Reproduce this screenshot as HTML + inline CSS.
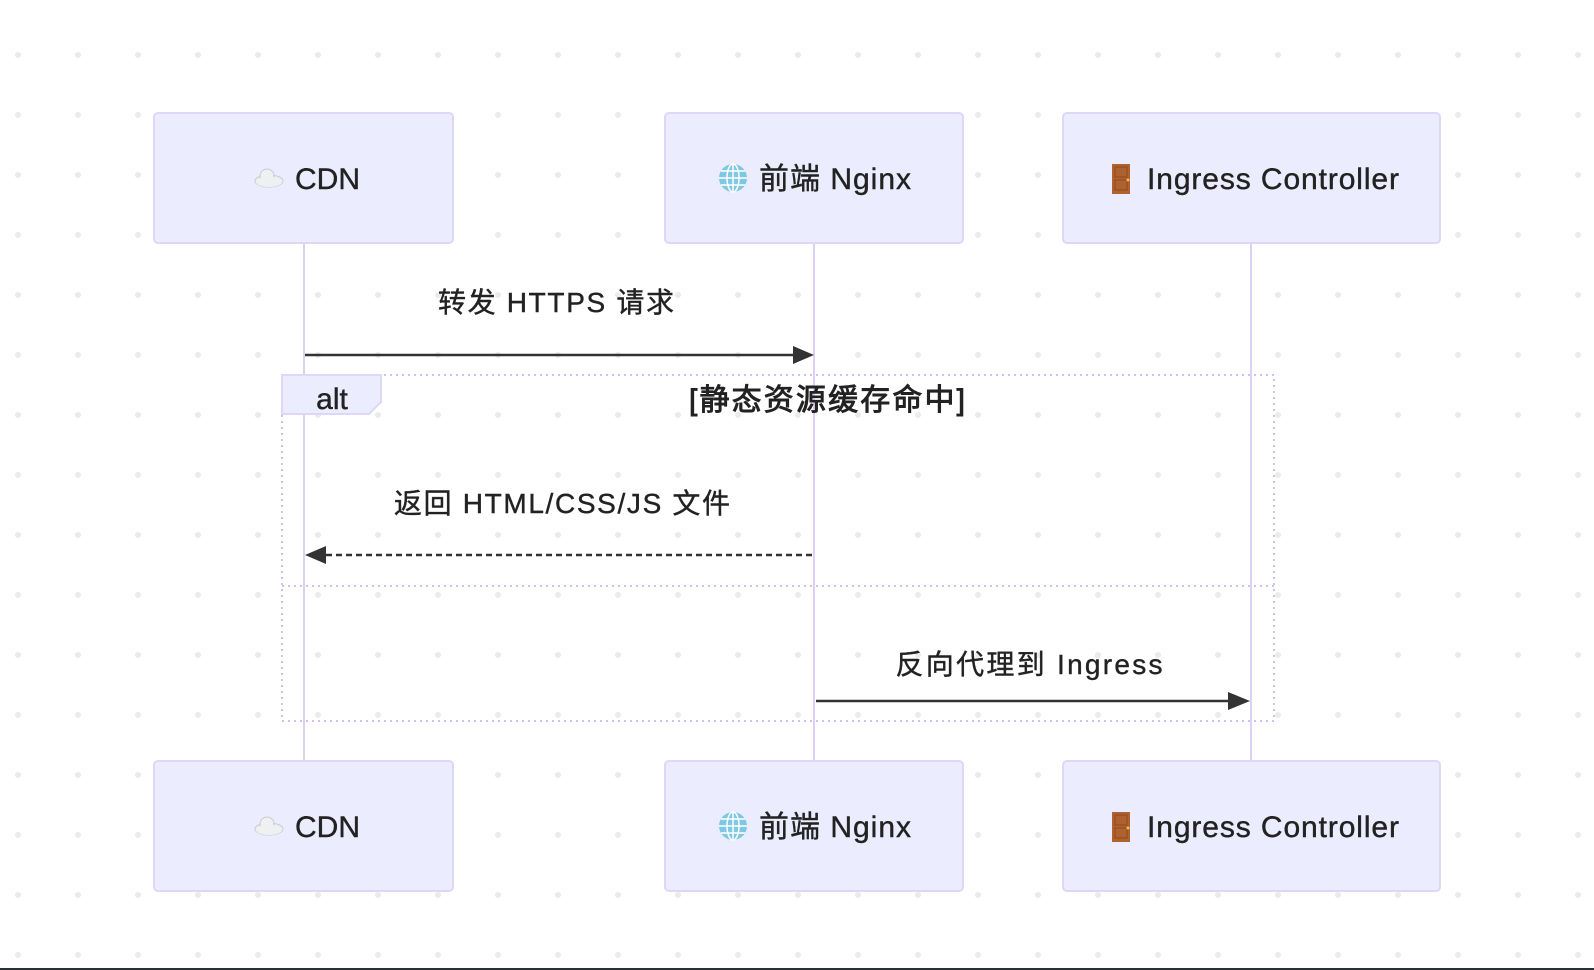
<!DOCTYPE html>
<html><head><meta charset="utf-8"><style>
html,body{margin:0;padding:0;background:#fff;}
svg{display:block}
text{font-family:"Liberation Sans","Noto Sans CJK SC",sans-serif;fill:#222;stroke:#222;stroke-width:0.4;}
</style></head><body>
<svg width="1594" height="970" viewBox="0 0 1594 970" xmlns="http://www.w3.org/2000/svg">
<defs>
<pattern id="dots" x="18" y="55" width="60" height="60" patternUnits="userSpaceOnUse">
<circle cx="0" cy="0" r="3" fill="#ebebeb"/><circle cx="60" cy="0" r="3" fill="#ebebeb"/><circle cx="0" cy="60" r="3" fill="#ebebeb"/><circle cx="60" cy="60" r="3" fill="#ebebeb"/>
</pattern>
<g id="cloud"><ellipse cx="0" cy="4" rx="14" ry="6" fill="#eef0f2" stroke="#c8ccd0" stroke-width="1"/><circle cx="-2" cy="-1" r="7" fill="#eef0f2" stroke="#c8ccd0" stroke-width="1"/><ellipse cx="0" cy="5" rx="13" ry="5" fill="#eef0f2"/></g>
<g id="globe"><circle r="14" fill="#7ec8e3"/><g stroke="#fff" stroke-width="1.5" fill="none"><ellipse rx="6" ry="14"/><line x1="-14" y1="0" x2="14" y2="0"/><line x1="0" y1="-14" x2="0" y2="14"/><line x1="-12" y1="-7" x2="12" y2="-7"/><line x1="-12" y1="7" x2="12" y2="7"/></g></g>
<g id="door"><rect x="-9" y="-15" width="18" height="30" fill="#b0622e"/><rect x="-6" y="-12" width="12" height="10" fill="none" stroke="#8a4a22" stroke-width="1"/><rect x="-6" y="1" width="12" height="10" fill="none" stroke="#8a4a22" stroke-width="1"/><circle cx="7" cy="1" r="1.5" fill="#f0c040"/></g>
</defs>
<rect width="1594" height="970" fill="url(#dots)"/>
<rect x="0" y="968" width="1594" height="2" fill="#263238"/>

<g stroke="#ddd0f5" stroke-width="2">
<line x1="304" y1="243" x2="304" y2="761"/>
<line x1="814" y1="243" x2="814" y2="761"/>
<line x1="1251" y1="243" x2="1251" y2="761"/>
</g>

<g fill="#ececff" stroke="#e0d6f8" stroke-width="2">
<rect x="154" y="113" width="299" height="130" rx="4"/>
<rect x="665" y="113" width="298" height="130" rx="4"/>
<rect x="1063" y="113" width="377" height="130" rx="4"/>
<rect x="154" y="761" width="299" height="130" rx="4"/>
<rect x="665" y="761" width="298" height="130" rx="4"/>
<rect x="1063" y="761" width="377" height="130" rx="4"/>
</g>
<g font-size="30">
<use href="#cloud" x="269" y="177"/><text x="295" y="189">CDN</text>
<use href="#globe" x="733" y="178"/><text x="759" y="189" textLength="152">前端 Nginx</text>
<use href="#door" x="1121" y="179"/><text x="1147" y="189" textLength="252">Ingress Controller</text>
<use href="#cloud" x="269" y="825"/><text x="295" y="837">CDN</text>
<use href="#globe" x="733" y="826"/><text x="759" y="837" textLength="152">前端 Nginx</text>
<use href="#door" x="1121" y="827"/><text x="1147" y="837" textLength="252">Ingress Controller</text>
</g>

<rect x="282" y="375" width="992" height="346" fill="none" stroke="#cfc0f0" stroke-width="2" stroke-dasharray="2,4"/>
<line x1="282" y1="586" x2="1274" y2="586" stroke="#cfc0f0" stroke-width="2" stroke-dasharray="2,4"/>
<path d="M282 375 H381 V402 L369 414 H282 Z" fill="#ececff" stroke="#e0d6f8" stroke-width="2"/>
<text x="332" y="409" font-size="30" text-anchor="middle">alt</text>
<text x="827" y="410" font-size="30" text-anchor="middle" textLength="276" style="stroke-width:0.9">[静态资源缓存命中]</text>

<text x="556" y="312" font-size="28" text-anchor="middle" textLength="236">转发 HTTPS 请求</text>
<line x1="305" y1="355" x2="795" y2="355" stroke="#333" stroke-width="2.5"/>
<path d="M793 346 L814 355 L793 364 Z" fill="#333"/>

<text x="562" y="513" font-size="28" text-anchor="middle" textLength="336">返回 HTML/CSS/JS 文件</text>
<line x1="812" y1="555" x2="326" y2="555" stroke="#333" stroke-width="2.5" stroke-dasharray="6,4"/>
<path d="M326 546 L305 555 L326 564 Z" fill="#333"/>

<text x="1029" y="674" font-size="28" text-anchor="middle" textLength="267">反向代理到 Ingress</text>
<line x1="816" y1="701" x2="1230" y2="701" stroke="#333" stroke-width="2.5"/>
<path d="M1228 692 L1250 701 L1228 710 Z" fill="#333"/>
</svg>
</body></html>
